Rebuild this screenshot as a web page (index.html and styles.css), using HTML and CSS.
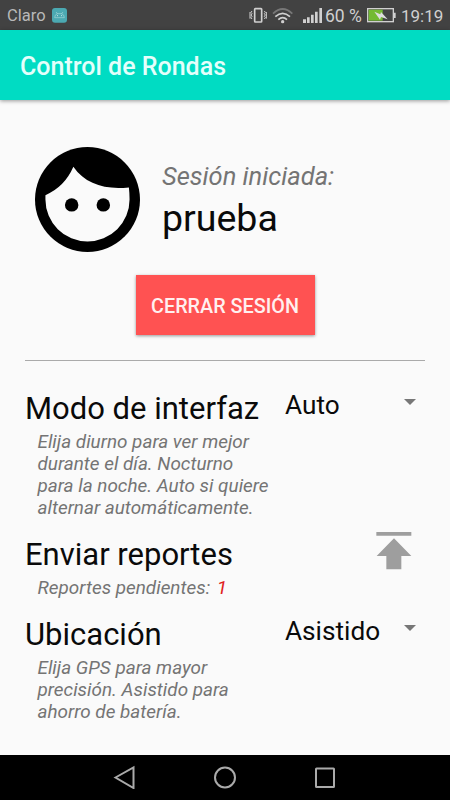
FILE: index.html
```html
<!DOCTYPE html>
<html lang="es">
<head>
<meta charset="utf-8">
<title>Control de Rondas</title>
<link rel="stylesheet" href="styles.css">
</head>
<body>
<div class="screen">
  <header class="status">
    <span class="carrier">Claro</span>
    <svg class="notice" width="15" height="15" viewBox="0 0 45 45"><rect width="45" height="44" rx="9" fill="#4ba9b2"/><path d="M8 29q0-9 8-12h13q8 3 8 12z M12 12l5 6 M33 12l-5 6" fill="none" stroke="#a3d5d8" stroke-width="2"/><path d="M15 23h3M27 23h3" stroke="#c5e5e6" stroke-width="3"/></svg>
    <svg class="icons" width="75" height="20" viewBox="0 0 225 60">
      <g fill="none" stroke="#d0d0d0">
        <rect x="17" y="14" width="21" height="40" rx="2" stroke-width="5"/>
        <path d="M9 21l-3 4 3 4-3 4 3 4-3 4 3 4M3 24v20M46 21l3 4-3 4 3 4-3 4 3 4-3 4M52 24v20" stroke-width="3"/>
        <path d="M72 29q29-28 58 0" stroke="#777" stroke-width="5"/>
        <path d="M79 38q22-20 44 0M88 47q13-12 26 0" stroke-width="5"/>
      </g>
      <circle cx="101" cy="53" r="5" fill="#d0d0d0"/>
      <path fill="#d0d0d0" d="M162 46h9v11h-9zM174 40h8v17h-8zM186 32h8v25h-8zM198 23h8v34h-8zM211 12h8v45h-8z"/>
    </svg>
    <span class="percent">60 %</span>
    <svg class="battery" width="29" height="15" viewBox="0 0 87 45"><rect x="2" y="2" width="77" height="39" fill="#444" stroke="#d0d0d0" stroke-width="4"/><path d="M81 14h5v16h-5z" fill="#d0d0d0"/><path d="M5 5h42v33H5z" fill="#73ba32"/><path d="M22 11l18 8 2-7 20 22-20-7-3 8z" fill="#ddd"/></svg>
    <span class="clock">19:19</span>
  </header>
  <div class="toolbar"><h1>Control de Rondas</h1></div>
  <main>
    <section class="profile">
      <svg width="105" height="105" viewBox="0 0 312 312"><circle cx="156" cy="156" r="156"/><path fill="#fafafa" d="M31 143Q88 119 114 59C150 111 209 128 279 120Q281 137 281 156A125 125 0 0 1 31 156Z"/><circle cx="109" cy="172" r="20"/><circle cx="203" cy="172" r="20"/></svg>
      <div class="who"><div class="label">Sesión iniciada:</div><div class="user">prueba</div></div>
    </section>
    <button class="logout">CERRAR SESIÓN</button>
    <hr>
    <section class="row">
      <div><h2 class="mode">Modo de interfaz</h2><p>Elija diurno para ver mejor<br>durante el día. Nocturno<br>para la noche. Auto si quiere<br>alternar automáticamente.</p></div>
      <div class="spinner"><span>Auto</span><i class="caret"></i></div>
    </section>
    <section class="row">
      <div><h2 class="send">Enviar reportes</h2><p>Reportes pendientes: <b>1</b></p></div>
      <svg class="upload" width="36" height="38" viewBox="0 0 108 114"><path fill="#9e9e9e" d="M1 0h105v11H1zM54 19l52 53H76v40H31V72H2z"/></svg>
    </section>
    <section class="row">
      <div><h2 class="place">Ubicación</h2><p>Elija GPS para mayor<br>precisión. Asistido para<br>ahorro de batería.</p></div>
      <div class="spinner"><span>Asistido</span><i class="caret"></i></div>
    </section>
  </main>
  <nav>
    <svg width="24" height="24" viewBox="0 0 24 24"><path d="M2.500 12.500L20.500 2.500V23Z"/></svg>
    <svg width="24" height="24" viewBox="0 0 24 24"><circle cx="12" cy="12.500" r="10"/></svg>
    <svg width="24" height="24" viewBox="0 0 24 24"><rect x="3" y="3.500" width="18" height="18.500" rx=".5"/></svg>
  </nav>
</div>
</body>
</html>
```

FILE: styles.css
```css
* { box-sizing: border-box; }
body, h1, h2, p { margin: 0; }
body { font-family: Roboto, sans-serif; background: #fafafa; color: #0a0a0a; }
.screen { width: 450px; height: 800px; display: flex; flex-direction: column; overflow: hidden; }
.status { height: 30px; background: #424242; display: flex; align-items: center; padding: 1px 6px 0 7px; font-size: 17.500px; color: #d0d0d0; line-height: 30px; white-space: nowrap; }
.status > * { flex-shrink: 0; }
.carrier { width: 45px; font-size: 16.500px; color: #b8b8b8; }
.icons { margin-left: auto; margin-top: -3px; }
.percent { width: 40px; margin-left: 1px; }
.battery { margin-left: 2px; }
.clock { margin-left: 5px; width: 43px; font-size: 17px; }
.toolbar { height: 70px; background: #00dcc3; box-shadow: 0 1px 4px rgba(0,0,0,.4); padding-left: 20px; }
h1 { font-size: 25px; line-height: 73px; font-weight: 500; color: #e4fffb; }
main { flex: 1; padding: 0 25px; }
.profile { display: flex; padding: 47px 0 0 10px; height: 175px; }
.who { padding: 14px 0 0 22px; }
.label { font-size: 25.500px; line-height: 30px; font-style: italic; color: #747474; }
.user { font-size: 37.500px; line-height: 44px; margin-top: 5px; }
.logout { display: block; width: 179px; height: 60px; margin: 0 auto; border: 0; padding: 2px 0 0; background: #ff5252; color: #fff0f0; font: 500 19.800px Roboto, sans-serif; box-shadow: 0 1px 3px rgba(0,0,0,.4); white-space: nowrap; }
hr { border: 0; height: 1px; background: #aaa; margin: 25px 0 30px; }
.row { display: grid; grid-template-columns: 260px 140px; margin-bottom: 18px; }
h2 { font-size: 31px; font-weight: 400; line-height: 36px; white-space: nowrap; }
p { margin: 4px 0 0 12.500px; font-size: 18.900px; line-height: 22px; font-style: italic; color: #747474; white-space: nowrap; }
b { font-weight: 400; color: #e02020; margin-left: 2px; }
.spinner { display: flex; justify-content: space-between; height: 30px; font-size: 26.200px; line-height: 30px; padding-right: 9px; margin-top: -1px; }
.caret { width: 12px; height: 6px; margin-top: 9px; background: #777; clip-path: polygon(0 0, 100% 0, 50% 100%); }
.upload { margin: -5px 0 0 91px; }
nav { height: 45px; background: #000; display: flex; justify-content: center; gap: 76px; padding-top: 10px; }
nav svg { fill: none; stroke: #aaa; stroke-width: 2; }
```
